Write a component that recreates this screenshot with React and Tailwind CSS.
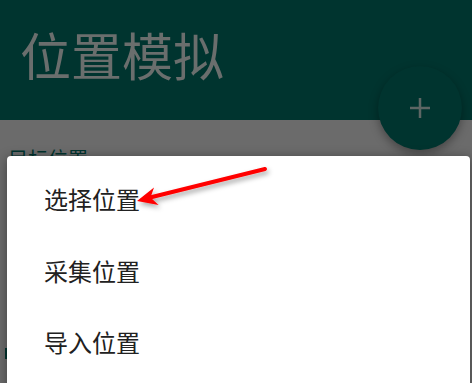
import React from "react";

export default function App() {
  const font = { fontFamily: '"Noto Sans CJK SC", "Noto Sans", sans-serif' };
  return (
    <div className="relative w-[472px] h-[383px] overflow-hidden bg-[#6b6b6b]" style={font}>
      <div className="h-[120px] bg-[#00342f] pl-[20px] pt-[24px]">
        <div className="text-[51px] leading-[60px] text-[#6a6e6d]">位置模拟</div>
      </div>
      <div className="pl-[8px] pt-[27px] text-[20px] leading-[24px] text-[#00332e]">目标位置</div>

      <div className="absolute left-[378px] top-[66px] w-[84px] h-[84px] rounded-full bg-[#00342f] shadow-[0_4px_10px_rgba(0,0,0,0.35)] flex items-center justify-center">
        <svg width="22" height="22" viewBox="0 0 22 22">
          <path d="M11 1v20M1 11h20" stroke="#5d6664" strokeWidth="2.5" />
        </svg>
      </div>

      <div className="absolute left-[5px] top-[348px] w-[3px] h-[11px] bg-[#00332e]" />

      <div className="absolute left-[7px] top-[156px] w-[463px] h-[240px] bg-white rounded-[4px] shadow-[0_2px_12px_rgba(0,0,0,0.4)] flex flex-col pt-[25px] pl-[37px]">
        <div className="h-[73px] text-[24px] leading-[36px] text-[#212121]">选择位置</div>
        <div className="h-[73px] text-[24px] leading-[36px] text-[#212121]">采集位置</div>
        <div className="h-[73px] text-[24px] leading-[36px] text-[#212121]">导入位置</div>
      </div>

      <svg className="absolute left-0 top-0" width="472" height="383" viewBox="0 0 472 383">
        <defs>
          <filter id="sh" x="-20%" y="-50%" width="140%" height="200%">
            <feDropShadow dx="2" dy="3" stdDeviation="2.5" floodColor="#000" floodOpacity="0.35" />
          </filter>
        </defs>
        <g filter="url(#sh)">
          <line x1="265" y1="169" x2="150" y2="197.5" stroke="#ff0000" strokeWidth="4" strokeLinecap="round" />
          <path d="M137 201 L154 187.5 L150.5 197.6 L158.6 205 Z" fill="#ff0000" />
        </g>
      </svg>
    </div>
  );
}
